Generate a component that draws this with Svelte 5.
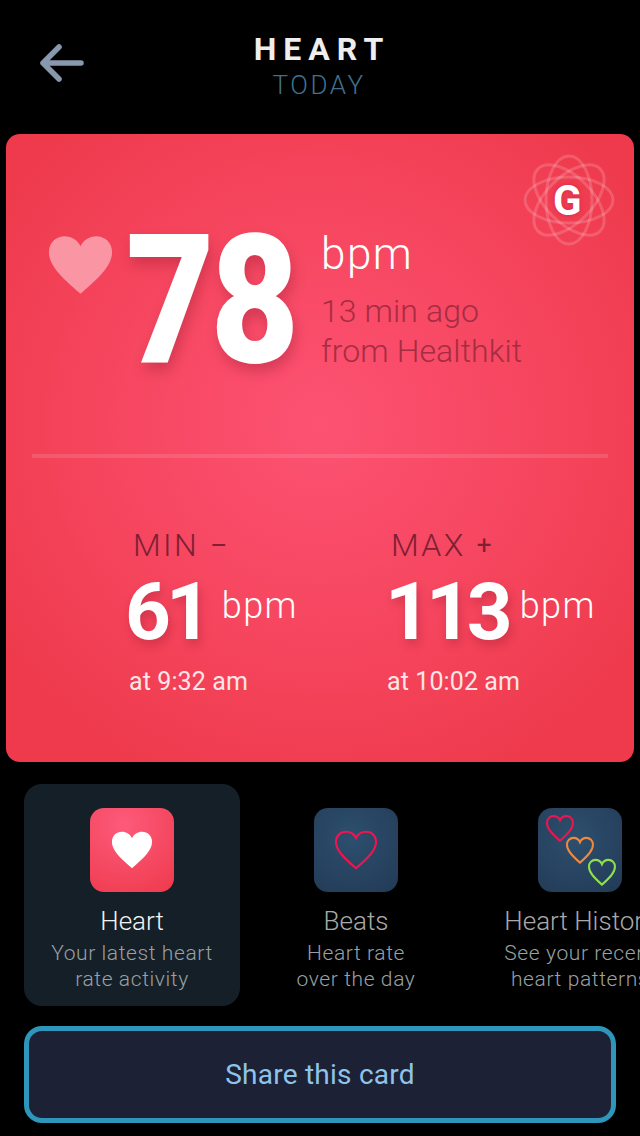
<script>
  const tiles = [
    { title: 'Heart', lines: ['Your latest heart', 'rate activity'], active: true, kind: 'solid' },
    { title: 'Beats', lines: ['Heart rate', 'over the day'], kind: 'line' },
    { title: 'Heart History', lines: ['See your recent', 'heart patterns'], kind: 'multi' }
  ];
  const heart = 'M12 21.5C5 15.5 1 11.5 1 7 1 3.7 3.5 1.5 6.5 1.5 8.8 1.5 11 2.8 12 5 13 2.8 15.2 1.5 17.5 1.5 20.5 1.5 23 3.7 23 7 23 11.5 19 15.5 12 21.5Z';
  const stats = [
    { label: 'MIN', sign: '–', value: '61', at: 'at 9:32 am', cls: 'min' },
    { label: 'MAX', sign: '+', value: '113', at: 'at 10:02 am', cls: 'max' }
  ];
</script>

<div class="screen">
  <header class="top">
    <svg class="back" viewBox="0 0 44 38" aria-hidden="true">
      <path d="M19 3 3 19l16 16M3 19h38" />
    </svg>
    <div class="heading">
      <div class="h1">HEART</div>
      <div class="h2">TODAY</div>
    </div>
  </header>

  <section class="card">
    <svg class="logo" viewBox="0 0 92 92" aria-hidden="true">
      <g fill="none" stroke="#fff" stroke-opacity=".17" stroke-width="3">
        <ellipse cx="46" cy="46" rx="44" ry="23" />
        <ellipse cx="46" cy="46" rx="44" ry="23" transform="rotate(45 46 46)" />
        <ellipse cx="46" cy="46" rx="44" ry="23" transform="rotate(90 46 46)" />
        <ellipse cx="46" cy="46" rx="44" ry="23" transform="rotate(135 46 46)" />
      </g>
    </svg>
    <span class="logo-g">G</span>

    <div class="now">
      <svg class="big-heart" viewBox="0 0 24 23" aria-hidden="true"><path d={heart} /></svg>
      <div class="big-num">78</div>
      <div class="now-side">
        <div class="now-unit">bpm</div>
        <div class="now-note">13 min ago</div>
        <div class="now-note">from Healthkit</div>
      </div>
    </div>

    <div class="rule"></div>

    <div class="stats">
      {#each stats as s}
        <div class="stat {s.cls}">
          <div class="stat-label"><span>{s.label}</span><span class="sign">{s.sign}</span></div>
          <div class="stat-row">
            <span class="stat-num">{s.value}</span>
            <span class="stat-unit">bpm</span>
          </div>
          <div class="stat-at">{s.at}</div>
        </div>
      {/each}
    </div>
  </section>

  <nav class="tiles">
    {#each tiles as t}
      <div class="tile" class:active={t.active}>
        <div class="icon {t.kind}">
          {#if t.kind === 'solid'}
            <svg class="ic-solid" viewBox="0 0 24 23" aria-hidden="true"><path d={heart} /></svg>
          {:else if t.kind === 'line'}
            <svg class="ic-line" viewBox="0 0 24 23" aria-hidden="true"><path d={heart} /></svg>
          {:else}
            <svg class="ic-multi" viewBox="0 0 84 84" aria-hidden="true">
              <g fill="none" stroke-width="1.7">
                <path stroke="#f4134f" transform="translate(7.8 6.2) scale(1.18 1.24)" d={heart} />
                <path stroke="#f0883e" transform="translate(27.8 28) scale(1.18 1.24)" d={heart} />
                <path stroke="#8fe04a" transform="translate(49.8 50) scale(1.18 1.24)" d={heart} />
              </g>
            </svg>
          {/if}
        </div>
        <div class="tile-title">{t.title}</div>
        <div class="tile-sub">{t.lines[0]}</div>
        <div class="tile-sub">{t.lines[1]}</div>
      </div>
    {/each}
  </nav>

  <button class="share">Share this card</button>
</div>

<style>
  :global(body) { margin: 0; background: #000; }
  .screen {
    width: 640px; height: 1136px; overflow: hidden; background: #000;
    font-family: Roboto, "Liberation Sans", sans-serif;
    display: flex; flex-direction: column;
  }
  .top { height: 134px; position: relative; flex: none; }
  .back {
    position: absolute; left: 40px; top: 44px; width: 44px; height: 38px;
    fill: none; stroke: #8899ad; stroke-width: 5.5; stroke-linecap: round; stroke-linejoin: round;
  }
  .heading { text-align: center; padding-top: 31px; }
  .h1 { font-size: 32px; line-height: 36px; font-weight: 700; letter-spacing: 7px; color: #eee; margin-right: -4px; }
  .h2 { font-size: 26px; line-height: 32px; font-weight: 300; letter-spacing: 2.6px; color: #41708e; padding-top: 2px; margin-right: 2px; }

  .card {
    position: relative; flex: none; box-sizing: border-box;
    margin: 0 6px; height: 628px; border-radius: 14px;
    background: radial-gradient(ellipse 62% 62% at 50% 46%, #fd5273 0%, #f6465f 55%, #ee3a4c 100%);
    display: flex; flex-direction: column;
  }
  .logo { position: absolute; right: 19px; top: 20px; width: 92px; height: 92px; }
  .logo-g {
    position: absolute; left: 547px; top: 45px; font-size: 42px; line-height: 44px; font-weight: 700; color: #fff;
    text-shadow: 0 0 5px rgba(200, 30, 60, .7);
  }
  .now { display: flex; align-items: flex-start; height: 320px; padding-left: 40px; }
  .big-heart { width: 69px; height: 66px; margin-top: 98px; fill: #fa95a3; flex: none; }
  .big-num {
    font-size: 180px; line-height: 180px; font-weight: 900; color: #fff;
    letter-spacing: -5px; margin: 77px 0 0 11px; width: 195px; flex: none;
    transform: scaleX(.85); transform-origin: left top;
    text-shadow: 3px 8px 14px rgba(130, 20, 40, .3);
  }
  .now-side { padding-top: 94px; }
  .now-unit { font-size: 44px; line-height: 52px; font-weight: 300; color: #fff; letter-spacing: 1.5px; }
  .now-note { font-size: 32px; line-height: 40px; font-weight: 300; color: #a62c43; letter-spacing: .1px; }
  .now-unit + .now-note { margin-top: 11px; }

  .rule { height: 4px; margin: 0 26px; background: rgba(255, 255, 255, .12); flex: none; }

  .stats { display: flex; padding-top: 69px; }
  .stat { flex: none; }
  .min { margin-left: 121px; width: 260px; }
  .stat-label { font-size: 32px; line-height: 36px; font-weight: 300; letter-spacing: 2.4px; color: #7d2034; display: flex; gap: 11px; margin-left: 6px; }
  .max .stat-label { margin-left: 4px; }
  .sign { font-size: 26px; font-weight: 400; }
  .stat-row { display: flex; align-items: flex-start; margin-top: 7px; height: 84px; margin-left: -2px; }
  .stat-num { font-size: 80px; line-height: 84px; font-weight: 700; color: #fff; letter-spacing: -5px; text-shadow: 2px 5px 10px rgba(130, 20, 40, .3); }
  .stat-unit { font-size: 36px; line-height: 42px; font-weight: 300; color: #fff; margin-left: 15px; margin-top: 15px; letter-spacing: 1.4px; }
  .max .stat-unit { margin-left: 12px; }
  .stat-at { font-size: 25px; line-height: 30px; font-weight: 400; color: #ffe6e6; margin-top: 13px; letter-spacing: .1px; }
  .min .stat-at { margin-left: 2px; }

  .tiles { display: flex; gap: 8px; padding: 22px 0 0 24px; flex: none; overflow: hidden; }
  .tile {
    flex: none; width: 216px; height: 222px; box-sizing: border-box; border-radius: 18px;
    padding-top: 24px; text-align: center; white-space: nowrap; display: flex; flex-direction: column; align-items: center;
  }
  .tile.active { background: #141f27; }
  .icon { width: 84px; height: 84px; border-radius: 14px; flex: none; margin-bottom: 14px; display: flex; align-items: center; justify-content: center; background: radial-gradient(circle at 45% 35%, #2d4f6e 0%, #223a56 100%); }
  .icon.solid { background: radial-gradient(circle at 40% 20%, #fd5a7b 0%, #f4475f 60%, #ee3a4c 100%); }
  .ic-solid { width: 44px; height: 42px; fill: #fff; }
  .ic-line { width: 44px; height: 42px; fill: none; stroke: #f4134f; stroke-width: 1.1; }
  .ic-multi { width: 84px; height: 84px; }
  .tile-title { font-size: 26px; line-height: 30px; font-weight: 300; color: #a9a9a9; margin-bottom: 4px; }
  .tile.active .tile-title { color: #f2f2f2; }
  .tile-sub { font-size: 21px; line-height: 26px; font-weight: 300; color: #9aa0a3; letter-spacing: .6px; }

  .share {
    flex: none; box-sizing: border-box; margin: 20px 24px 0; width: 592px; height: 97px;
    border: 5px solid #2e96bb; border-radius: 18px; background: #1c2135;
    font: 400 28px Roboto, sans-serif; letter-spacing: .25px; color: #8fc4ea;
  }
</style>
